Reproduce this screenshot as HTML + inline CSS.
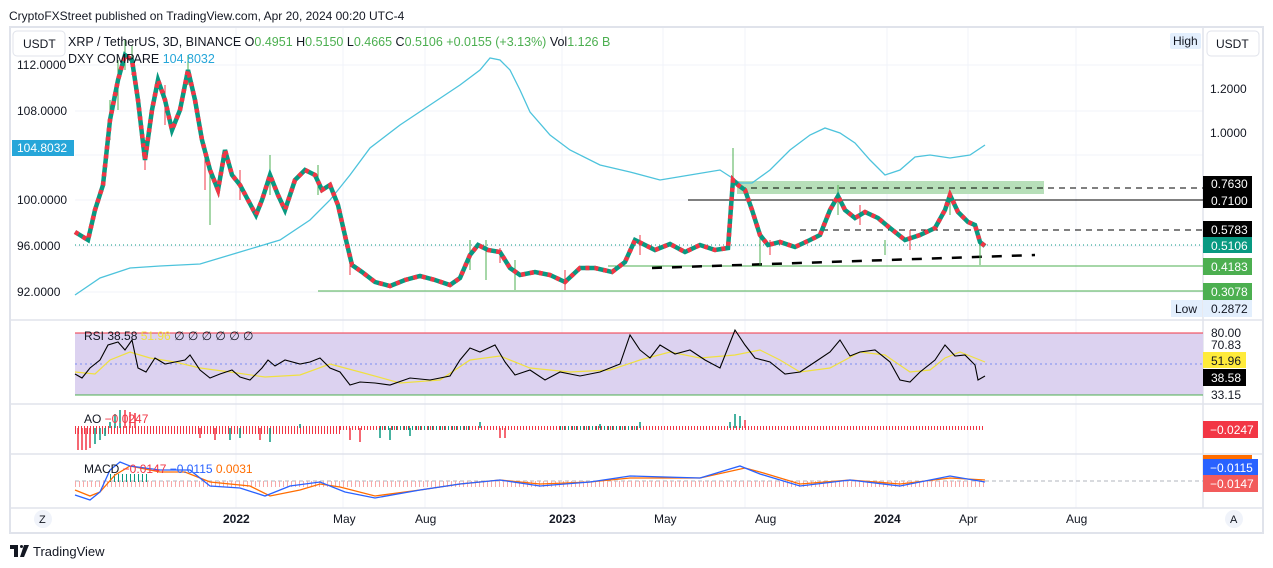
<!DOCTYPE html>
<html><head><meta charset="utf-8"><style>
html,body{margin:0;padding:0;background:#fff;width:1273px;height:568px;overflow:hidden;font-family:"Liberation Sans",sans-serif}
svg text{font-family:"Liberation Sans",sans-serif}
</style></head><body>
<svg width="1273" height="568" viewBox="0 0 1273 568" xmlns="http://www.w3.org/2000/svg">
<text x="9" y="20" font-size="12" fill="#131722">CryptoFXStreet published on TradingView.com, Apr 20, 2024 00:20 UTC-4</text>
<rect x="10" y="27" width="1253" height="506" fill="#fff" stroke="#e0e3eb" stroke-width="2"/>
<g stroke="#f0f3fa" stroke-width="1">
<line x1="236" y1="28" x2="236" y2="508"/><line x1="343" y1="28" x2="343" y2="508"/><line x1="425" y1="28" x2="425" y2="508"/><line x1="562" y1="28" x2="562" y2="508"/><line x1="663" y1="28" x2="663" y2="508"/><line x1="745" y1="28" x2="745" y2="508"/><line x1="887" y1="28" x2="887" y2="508"/><line x1="968" y1="28" x2="968" y2="508"/><line x1="1076" y1="28" x2="1076" y2="508"/>
<line x1="75" y1="65" x2="1203" y2="65"/><line x1="75" y1="111" x2="1203" y2="111"/><line x1="75" y1="155" x2="1203" y2="155"/><line x1="75" y1="200" x2="1203" y2="200"/><line x1="75" y1="246" x2="1203" y2="246"/><line x1="75" y1="292" x2="1203" y2="292"/>
</g>
<g stroke="#e0e3eb" stroke-width="1.5">
<line x1="10" y1="320" x2="1263" y2="320"/><line x1="10" y1="404" x2="1263" y2="404"/><line x1="10" y1="454" x2="1263" y2="454"/><line x1="10" y1="508" x2="1263" y2="508"/>
<line x1="1203" y1="28" x2="1203" y2="508"/>
</g>
<rect x="737" y="181" width="307" height="13" fill="#b7dfb9"/>
<line x1="740" y1="188" x2="1203" y2="188" stroke="#000" stroke-dasharray="6 5"/>
<line x1="688" y1="200" x2="1203" y2="200" stroke="#000"/>
<line x1="800" y1="230" x2="1203" y2="230" stroke="#000" stroke-dasharray="6 5"/>
<line x1="75" y1="245" x2="1203" y2="245" stroke="#089981" stroke-dasharray="1 3"/>
<line x1="608" y1="266" x2="1203" y2="266" stroke="#4caf50"/>
<line x1="318" y1="291" x2="1203" y2="291" stroke="#4caf50"/>
<line x1="652" y1="268" x2="1035" y2="255" stroke="#000" stroke-width="2.5" stroke-dasharray="10 10"/>
<polyline fill="none" stroke="#4dc3dc" stroke-width="1.3" points="75,295 100,278 130,268 160,266 200,264 240,252 280,240 310,220 330,200 350,175 370,148 400,125 430,105 460,85 480,70 490,58 500,60 510,70 520,90 530,112 550,135 570,150 600,165 630,172 660,180 690,175 720,170 740,183 752,183 770,170 790,150 810,135 825,128 840,133 855,143 870,160 885,175 900,170 915,157 930,155 950,158 970,155 985,145"/>
<!-- wicks -->
<path d="M110 100v40M118 60v50M125 40v30M132 45v30M188 55v30M210 165v60M270 155v40M318 165v30M470 240v30M486 240v40M515 260v30M733 148v30M760 230v35M838 185v30M950 190v25M980 235v30M885 240v15" stroke="#4caf50" stroke-width="1"/>
<path d="M145 140v30M165 85v40M205 150v40M240 170v30M350 250v25M500 248v15M565 270v20M640 235v20M770 240v15M860 205v20M910 230v20" stroke="#f23645" stroke-width="1"/>
<polyline fill="none" stroke="#089981" stroke-width="4.5" points="75,232 88,240 95,210 103,185 110,120 118,80 125,55 132,60 138,100 145,160 152,110 158,80 165,100 172,130 180,110 188,70 195,100 202,140 210,170 218,190 225,150 232,175 240,185 248,200 256,215 262,200 270,175 278,195 285,210 295,180 305,170 315,175 322,190 330,185 338,205 346,240 352,265 362,272 375,282 390,286 405,280 420,276 435,280 450,285 460,278 470,255 478,245 488,250 500,252 510,268 520,275 535,272 550,275 565,282 580,268 595,268 612,272 625,262 635,240 645,245 655,250 670,244 685,252 700,245 715,250 728,248 733,180 738,185 745,190 752,210 760,235 768,245 780,242 795,247 810,240 820,235 830,210 838,196 845,210 855,218 865,212 878,218 890,228 905,240 920,235 935,228 945,210 950,195 958,212 968,222 975,225 980,242 985,246"/>
<polyline fill="none" stroke="#f23645" stroke-width="4.5" stroke-dasharray="4 5" points="75,232 88,240 95,210 103,185 110,120 118,80 125,55 132,60 138,100 145,160 152,110 158,80 165,100 172,130 180,110 188,70 195,100 202,140 210,170 218,190 225,150 232,175 240,185 248,200 256,215 262,200 270,175 278,195 285,210 295,180 305,170 315,175 322,190 330,185 338,205 346,240 352,265 362,272 375,282 390,286 405,280 420,276 435,280 450,285 460,278 470,255 478,245 488,250 500,252 510,268 520,275 535,272 550,275 565,282 580,268 595,268 612,272 625,262 635,240 645,245 655,250 670,244 685,252 700,245 715,250 728,248 733,180 738,185 745,190 752,210 760,235 768,245 780,242 795,247 810,240 820,235 830,210 838,196 845,210 855,218 865,212 878,218 890,228 905,240 920,235 935,228 945,210 950,195 958,212 968,222 975,225 980,242 985,246"/>
<rect x="13" y="31" width="52" height="25" rx="4" fill="#fff" stroke="#e0e3eb"/>
<text x="23" y="48" font-size="12" fill="#131722">USDT</text>
<text x="68" y="46" font-size="12.5" fill="#131722">XRP / TetherUS, 3D, BINANCE  O<tspan fill="#4caf50">0.4951</tspan>  H<tspan fill="#4caf50">0.5150</tspan>  L<tspan fill="#4caf50">0.4665</tspan>  C<tspan fill="#4caf50">0.5106  +0.0155 (+3.13%)</tspan>  Vol<tspan fill="#4caf50">1.126 B</tspan></text>
<text x="68" y="63" font-size="12.5" fill="#131722">DXY COMPARE  <tspan fill="#26a6d9">104.8032</tspan></text>
<g font-size="12" fill="#131722">
<text x="17" y="69">112.0000</text><text x="17" y="115">108.0000</text><text x="17" y="204">100.0000</text><text x="17" y="250">96.0000</text><text x="17" y="296">92.0000</text>
</g>
<rect x="12" y="140" width="62" height="16" fill="#26a6d9"/><text x="17" y="152" font-size="12" fill="#fff">104.8032</text>
<rect x="1170" y="33" width="31" height="16" rx="2" fill="#e3effd"/><text x="1173" y="45" font-size="12" fill="#131722">High</text>
<rect x="1207" y="31" width="52" height="25" rx="4" fill="#fff" stroke="#e0e3eb"/><text x="1216" y="48" font-size="12" fill="#131722">USDT</text>
<g font-size="12" fill="#131722"><text x="1210" y="93">1.2000</text><text x="1210" y="137">1.0000</text></g>
<g font-size="12" fill="#fff">
<rect x="1203" y="176" width="49" height="16" fill="#000"/><text x="1211" y="188">0.7630</text>
<rect x="1203" y="192" width="49" height="16" fill="#000"/><text x="1211" y="205">0.7100</text>
<rect x="1203" y="221" width="49" height="16" fill="#000"/><text x="1211" y="234">0.5783</text>
<rect x="1203" y="237" width="49" height="16" fill="#089981"/><text x="1211" y="250">0.5106</text>
<rect x="1203" y="258" width="49" height="17" fill="#4caf50"/><text x="1211" y="271">0.4183</text>
<rect x="1203" y="283" width="49" height="17" fill="#4caf50"/><text x="1211" y="296">0.3078</text>
</g>
<rect x="1171" y="300" width="31" height="17" fill="#e3effd"/><text x="1175" y="313" font-size="12" fill="#131722">Low</text>
<rect x="1203" y="300" width="49" height="17" fill="#e3effd"/><text x="1211" y="313" font-size="12" fill="#131722">0.2872</text>
<rect x="75" y="333" width="1128" height="62" fill="#dcd2f0"/>
<line x1="75" y1="333" x2="1203" y2="333" stroke="#f23645"/>
<line x1="75" y1="395" x2="1203" y2="395" stroke="#4caf50"/>
<line x1="75" y1="364" x2="1203" y2="364" stroke="#7b8ff0" stroke-dasharray="2 3"/>
<polyline fill="none" stroke="#f0e040" stroke-width="1.2" points="75,372 95,374 110,360 130,352 150,358 175,362 200,368 230,372 265,377 300,375 330,364 360,372 400,383 440,380 470,360 500,356 530,368 570,372 610,370 640,360 670,352 700,358 735,355 760,350 780,360 800,372 830,368 860,352 885,355 910,372 930,370 945,358 960,352 985,362"/>
<polyline fill="none" stroke="#000" stroke-width="1.1" points="75,374 82,378 90,368 100,360 108,345 118,342 125,350 132,340 138,368 146,372 155,358 165,364 175,362 185,360 190,355 200,370 210,378 220,374 232,370 240,377 250,380 262,368 268,360 275,366 285,360 300,364 310,362 320,358 330,368 340,372 350,385 360,382 375,383 390,385 410,378 430,380 450,376 460,360 470,348 480,352 495,345 505,362 515,375 530,370 545,380 560,372 580,376 600,372 620,364 630,335 640,350 650,358 660,345 675,354 690,350 705,360 720,368 735,330 745,345 755,358 770,362 785,374 800,372 815,362 830,352 840,340 850,356 860,352 875,350 890,362 900,380 910,382 920,372 935,360 945,345 955,356 965,355 975,365 978,380 985,376"/>
<text x="84" y="340" font-size="12" fill="#131722">RSI  38.58  <tspan fill="#f0e040">51.96</tspan>  ∅ ∅ ∅ ∅ ∅ ∅</text>
<g font-size="12" fill="#131722"><text x="1211" y="337">80.00</text><text x="1211" y="349">70.83</text><text x="1211" y="399">33.15</text></g>
<rect x="1203" y="352" width="43" height="16" fill="#ffeb3b"/><text x="1211" y="365" font-size="12" fill="#131722">51.96</text>
<rect x="1203" y="369" width="43" height="17" fill="#000"/><text x="1211" y="382" font-size="12" fill="#fff">38.58</text>
<!-- AO -->
<line x1="75" y1="430" x2="340" y2="430" stroke="#f23645" stroke-width="8" stroke-dasharray="1 2"/>
<line x1="340" y1="428" x2="985" y2="428" stroke="#f23645" stroke-width="4" stroke-dasharray="1 2"/>
<line x1="380" y1="428" x2="470" y2="428" stroke="#089981" stroke-width="4" stroke-dasharray="1 3"/>
<line x1="560" y1="428" x2="640" y2="428" stroke="#089981" stroke-width="4" stroke-dasharray="1 3"/>
<path d="M78 428v22M82 428v22M86 428v22M90 428v20M125 428v-18M130 428v-16M135 428v-15M200 428v10M215 428v12M260 428v12M350 428v12M360 428v14M500 428v10M505 428v10M745 428v-8" stroke="#f23645" stroke-width="1.5"/>
<path d="M95 428v16M100 428v12M105 428v8M110 428v-6M115 428v-14M120 428v-18M230 428v12M240 428v10M270 428v14M300 428v-4M380 428v10M390 428v12M410 428v8M480 428v-6M600 428v-4M640 428v-6M730 428v-6M735 428v-14M740 428v-12" stroke="#089981" stroke-width="1.5"/>
<text x="84" y="423" font-size="12" fill="#131722">AO  <tspan fill="#f23645">−0.0247</tspan></text>
<rect x="1203" y="421" width="55" height="17" fill="#f23645"/><text x="1210" y="434" font-size="12" fill="#fff">−0.0247</text>
<!-- MACD -->
<line x1="75" y1="481" x2="1203" y2="481" stroke="#b2b5be" stroke-dasharray="4 3"/>
<line x1="75" y1="484" x2="985" y2="484" stroke="#f7a9a9" stroke-width="6" stroke-dasharray="1 3"/>
<line x1="110" y1="478" x2="150" y2="478" stroke="#089981" stroke-width="8" stroke-dasharray="1 3"/>
<polyline fill="none" stroke="#ff6d00" stroke-width="1.3" points="75,490 90,496 100,492 115,475 130,466 160,472 185,472 210,482 250,486 270,496 300,490 320,484 340,487 375,496 420,490 460,484 500,480 540,484 590,482 630,478 700,478 745,468 760,472 800,484 850,480 900,484 950,478 985,480"/>
<polyline fill="none" stroke="#2962ff" stroke-width="1.3" points="75,495 90,500 100,492 110,470 120,462 130,466 160,470 190,470 210,486 240,488 265,496 290,486 320,482 345,492 375,498 420,490 460,484 500,480 540,486 590,482 630,476 700,478 740,466 760,474 800,486 850,480 900,486 950,476 985,482"/>
<text x="84" y="473" font-size="12" fill="#131722">MACD  <tspan fill="#f23645">−0.0147</tspan>  <tspan fill="#2962ff">−0.0115</tspan>  <tspan fill="#ff6d00">0.0031</tspan></text>
<rect x="1203" y="455" width="49" height="4" fill="#ff6d00"/>
<rect x="1203" y="459" width="55" height="16" fill="#2962ff"/><text x="1210" y="472" font-size="12" fill="#fff">−0.0115</text>
<rect x="1203" y="475" width="55" height="17" fill="#f25b5b"/><text x="1210" y="488" font-size="12" fill="#fff">−0.0147</text>
<circle cx="43" cy="519" r="9" fill="#f0f3fa"/><text x="39" y="523" font-size="11" fill="#131722">Z</text>
<circle cx="1234" cy="519" r="9" fill="#f0f3fa"/><text x="1230" y="523" font-size="11" fill="#131722">A</text>
<g font-size="12" fill="#131722">
<text x="223" y="523" font-weight="bold">2022</text><text x="333" y="523">May</text><text x="415" y="523">Aug</text><text x="549" y="523" font-weight="bold">2023</text><text x="654" y="523">May</text><text x="755" y="523">Aug</text><text x="874" y="523" font-weight="bold">2024</text><text x="959" y="523">Apr</text><text x="1066" y="523">Aug</text>
</g>
<path d="M10 545h8v12h-4v-8h-4z" fill="#131722"/>
<circle cx="21.5" cy="546.5" r="1.5" fill="#131722"/>
<path d="M24 545h5l-5 12h-4z" fill="#131722"/>
<text x="33" y="556" font-size="13" fill="#131722">TradingView</text>
</svg>
</body></html>
